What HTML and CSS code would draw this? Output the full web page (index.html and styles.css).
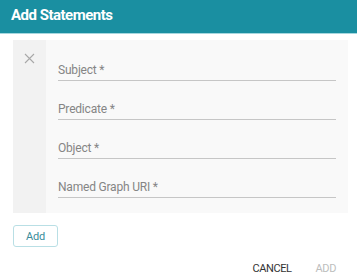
FILE: index.html
```html
<!DOCTYPE html>
<html lang="en">
<head>
  <meta charset="UTF-8">
  <title>Add Statements</title>
  <link rel="stylesheet" href="styles.css">
</head>
<body>
  <div class="dialog">
    <h2 class="dialog-title">Add Statements</h2>

    <div class="dialog-body">
      <div class="statement">
        <div class="statement-side">
          <button class="remove-btn" aria-label="Remove">
            <svg width="11" height="11" viewBox="0 0 11 11">
              <path d="M1 1L10 10M10 1L1 10" stroke="#a8a8a8" stroke-width="1.1" fill="none"/>
            </svg>
          </button>
        </div>
        <div class="statement-fields">
          <div class="field"><label>Subject *</label></div>
          <div class="field"><label>Predicate *</label></div>
          <div class="field"><label>Object *</label></div>
          <div class="field"><label>Named Graph URI *</label></div>
        </div>
      </div>

      <button class="add-btn">Add</button>
    </div>

    <div class="dialog-actions">
      <button class="action-btn">CANCEL</button>
      <button class="action-btn disabled">ADD</button>
    </div>
  </div>
</body>
</html>
```

FILE: styles.css
```css
* {
  margin: 0;
  padding: 0;
  box-sizing: border-box;
}

body {
  font-family: Roboto, "Liberation Sans", Arial, sans-serif;
  background: #ffffff;
  color: #333;
}

.dialog {
  width: 357px;
  height: 279px;
  background: #fff;
}

.dialog-title {
  height: 34px;
  background: #1a8fa1;
  border-bottom: 1px solid #a6d7de;
  color: #fff;
  font-size: 15px;
  font-weight: 700;
  letter-spacing: -0.5px;
  line-height: 31px;
  padding-left: 11px;
}

.dialog-body {
  padding: 6px 9px 0 13px;
}

.statement {
  display: flex;
  background: #f9f9f9;
  height: 173px;
}

.statement-side {
  width: 33px;
  background: #f2f2f2;
  display: flex;
  justify-content: center;
  padding-top: 12px;
}

.remove-btn {
  background: none;
  border: none;
  width: 11px;
  height: 11px;
  cursor: pointer;
}

.statement-fields {
  flex: 1;
  padding: 11px 12px 0 12px;
}

.field {
  height: 30px;
  margin-bottom: 9px;
  border-bottom: 1px solid #c6c6c6;
  display: flex;
  align-items: flex-end;
  padding-bottom: 3px;
}

.field label {
  font-size: 12px;
  letter-spacing: -0.2px;
  color: #858585;
}

.add-btn {
  margin-top: 12px;
  width: 45px;
  height: 22px;
  background: #fff;
  border: 1px solid #b9dfe5;
  border-radius: 3px;
  color: #3a8d9b;
  font-family: inherit;
  font-size: 11px;
  letter-spacing: -0.2px;
}

.dialog-actions {
  display: flex;
  justify-content: flex-end;
  gap: 24px;
  padding: 15px 21px 0 0;
}

.action-btn {
  background: none;
  border: none;
  font-family: inherit;
  font-size: 11px;
  font-weight: 400;
  letter-spacing: -0.4px;
  color: #333;
}

.action-btn.disabled {
  color: #bdbdbd;
}
```
